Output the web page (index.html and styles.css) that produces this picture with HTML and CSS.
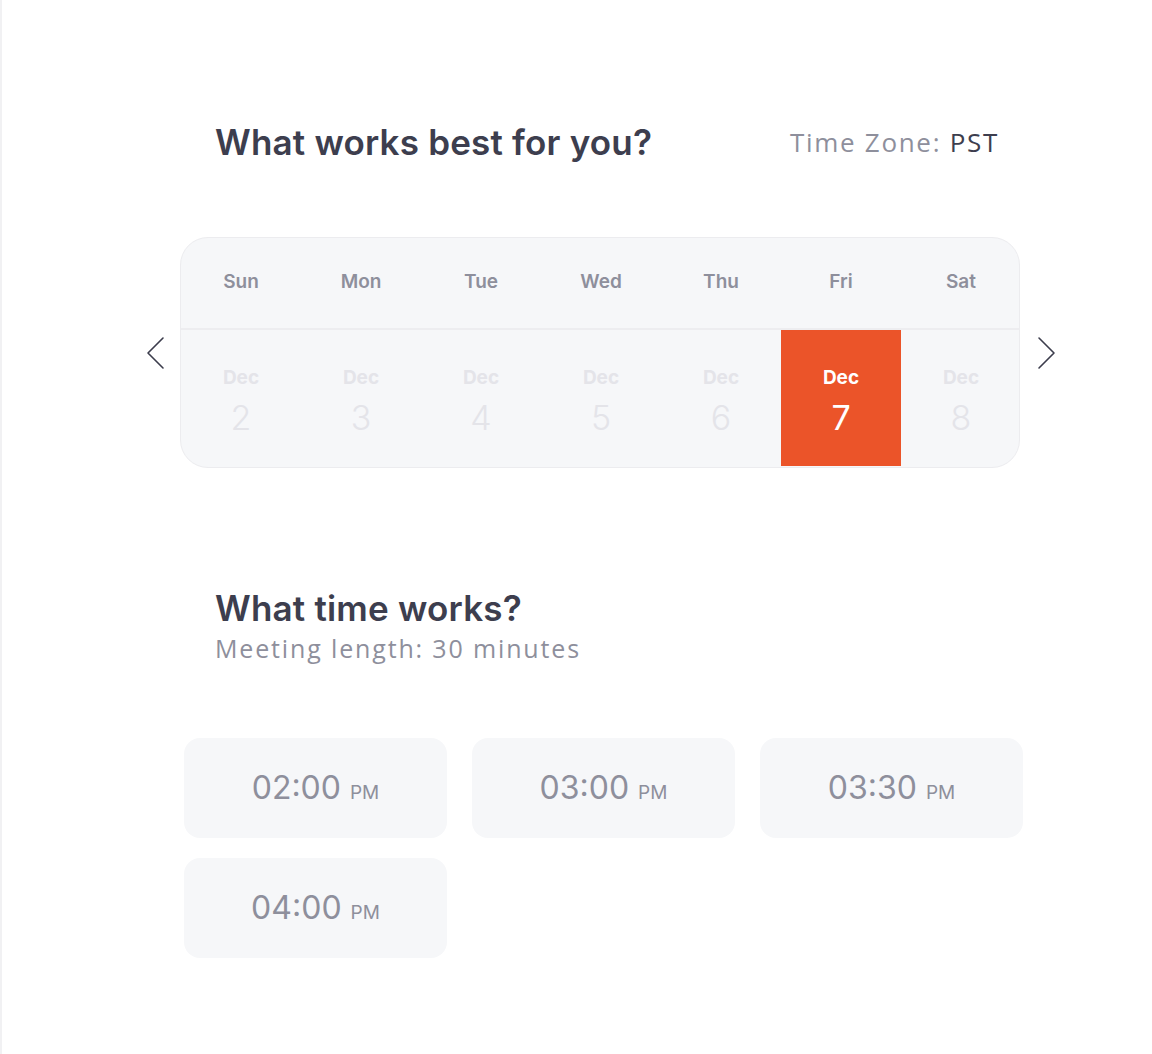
FILE: index.html
```html
<!DOCTYPE html>
<html lang="en">
<head>
<meta charset="utf-8">
<title>Schedule</title>
<link rel="stylesheet" href="styles.css">
</head>
<body>
<div class="page">
  <header class="top">
    <h1 class="title">What works best for you?</h1>
    <div class="tz"><span class="tz-label">Time Zone:</span> <span class="tz-value">PST</span></div>
  </header>

  <div class="cal-row">
    <button class="nav" aria-label="Previous week">
      <svg width="24" height="34" viewBox="0 0 24 34"><path d="M19 2 L4 17 L19 32" fill="none" stroke="#3c3d4c" stroke-width="1.6" stroke-linecap="round" stroke-linejoin="round"/></svg>
    </button>
    <div class="cal">
      <div class="days">
        <div class="day">Sun</div>
        <div class="day">Mon</div>
        <div class="day">Tue</div>
        <div class="day">Wed</div>
        <div class="day">Thu</div>
        <div class="day">Fri</div>
        <div class="day">Sat</div>
      </div>
      <div class="dates">
        <div class="date"><span class="mon">Dec</span><span class="num">2</span></div>
        <div class="date"><span class="mon">Dec</span><span class="num">3</span></div>
        <div class="date"><span class="mon">Dec</span><span class="num">4</span></div>
        <div class="date"><span class="mon">Dec</span><span class="num">5</span></div>
        <div class="date"><span class="mon">Dec</span><span class="num">6</span></div>
        <div class="date selected"><span class="mon">Dec</span><span class="num">7</span></div>
        <div class="date"><span class="mon">Dec</span><span class="num">8</span></div>
      </div>
    </div>
    <button class="nav" aria-label="Next week">
      <svg width="24" height="34" viewBox="0 0 24 34"><path d="M4 2 L19 17 L4 32" fill="none" stroke="#3c3d4c" stroke-width="1.6" stroke-linecap="round" stroke-linejoin="round"/></svg>
    </button>
  </div>

  <section class="time-head">
    <h2 class="title">What time works?</h2>
    <p class="sub">Meeting length: 30 minutes</p>
  </section>

  <div class="slots">
    <div class="slot"><span class="t">02:00</span><span class="ap">PM</span></div>
    <div class="slot"><span class="t">03:00</span><span class="ap">PM</span></div>
    <div class="slot"><span class="t">03:30</span><span class="ap">PM</span></div>
    <div class="slot"><span class="t">04:00</span><span class="ap">PM</span></div>
  </div>
</div>
</body>
</html>
```

FILE: styles.css
```css
* { box-sizing: border-box; }

html, body {
  margin: 0;
  padding: 0;
  background: #ffffff;
}

body {
  border-left: 2px solid #f1f1f3;
  min-height: 1054px;
  font-family: Inter, "Noto Sans", sans-serif;
}

.page {
  padding-top: 122px;
  padding-left: 142px;
  width: 1100px;
}

.top {
  display: flex;
  justify-content: space-between;
  align-items: center;
  margin-left: 71px;
  width: 784px;
  height: 40px;
}

.title {
  margin: 0;
  font-family: Inter, sans-serif;
  font-weight: 600;
  font-size: 35px;
  line-height: 40px;
  color: #3d3e4e;
  letter-spacing: 0.2px;
}

.tz {
  font-family: "Open Sans", sans-serif;
  font-size: 26px;
  letter-spacing: 1.7px;
  color: #3d3e4e;
}

.tz-label { color: #8e8f9c; }
.tz-value { color: #3d3e4e; }

.cal-row {
  display: flex;
  align-items: center;
  margin-top: 75px;
}

.nav {
  border: 0;
  background: none;
  padding: 0;
  width: 24px;
  height: 34px;
  display: block;
}

.nav svg { display: block; }

.cal-row .nav:first-child { margin-right: 12px; }
.cal-row .nav:last-child { margin-left: 15px; }

.cal {
  width: 840px;
  height: 231px;
  border: 1px solid #ececef;
  border-radius: 28px;
  background: #f6f7f9;
  overflow: hidden;
}

.days, .dates {
  display: grid;
  grid-template-columns: repeat(7, 120px);
}

.days {
  height: 92px;
  border-bottom: 2px solid #ededf0;
}

.day {
  display: flex;
  align-items: center;
  justify-content: center;
  padding-bottom: 4px;
  font-size: 19px;
  font-weight: 600;
  color: #8e8f9c;
}

.dates { height: 136px; }

.date {
  display: flex;
  flex-direction: column;
  align-items: center;
  padding-top: 36px;
  color: #e4e4e9;
}

.mon {
  font-size: 19px;
  font-weight: 700;
  line-height: 24px;
}

.num {
  font-size: 34px;
  font-weight: 300;
  line-height: 40px;
  margin-top: 8px;
}

.date.selected {
  background: #eb5429;
  color: #ffffff;
}

.date.selected .num { font-weight: 400; }

.time-head {
  margin-top: 120px;
  margin-left: 71px;
}

.sub {
  margin: 5px 0 0;
  font-family: "Open Sans", sans-serif;
  font-size: 25px;
  line-height: 30px;
  color: #8e8f9c;
  letter-spacing: 1.85px;
}

.slots {
  margin-top: 75px;
  margin-left: 40px;
  display: grid;
  grid-template-columns: repeat(3, 263px);
  column-gap: 25px;
  row-gap: 20px;
}

.slot {
  height: 100px;
  border-radius: 16px;
  background: #f6f7f9;
  display: flex;
  align-items: baseline;
  justify-content: center;
  padding-top: 30px;
  color: #8e8f9c;
}

.t {
  font-size: 32px;
  font-weight: 400;
  line-height: 40px;
}

.ap {
  font-size: 19px;
  margin-left: 9px;
}
```
